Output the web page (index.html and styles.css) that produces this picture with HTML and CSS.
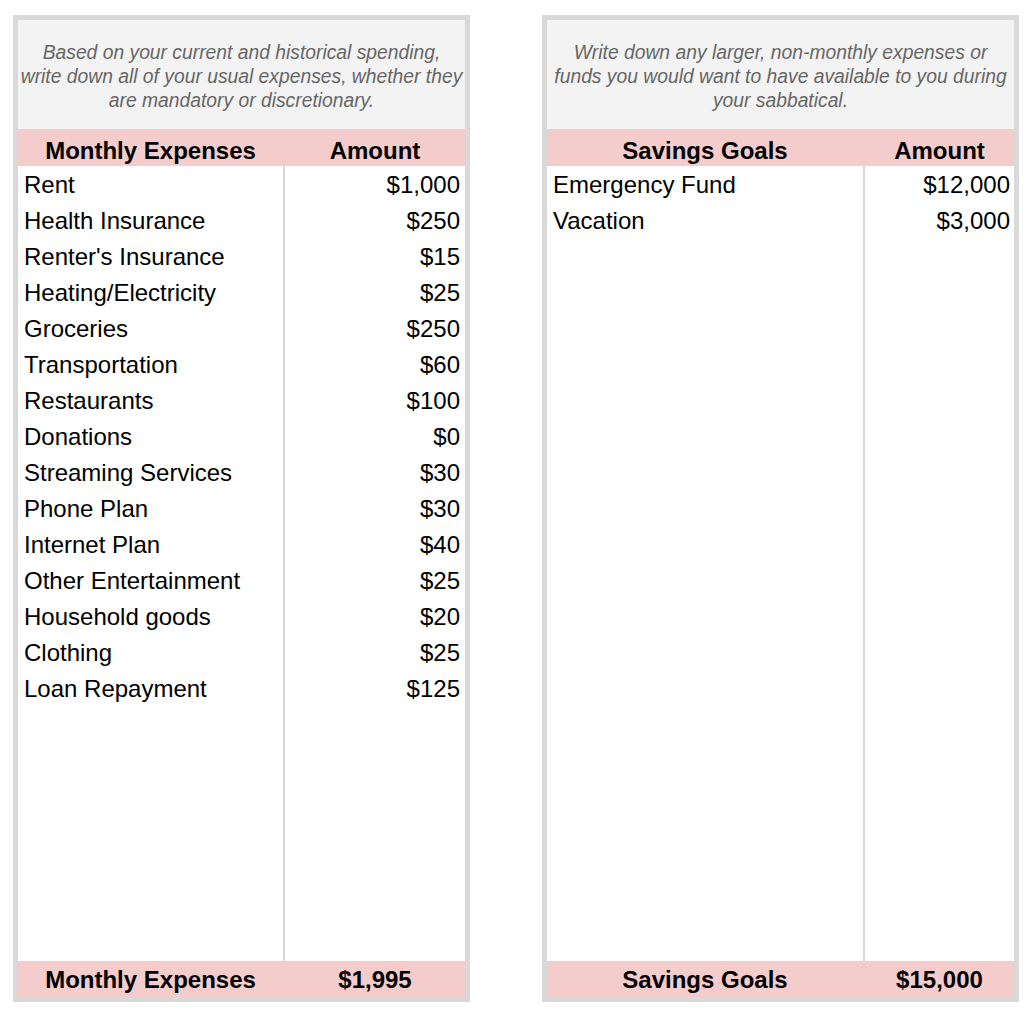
FILE: index.html
```html
<!DOCTYPE html>
<html lang="en">
<head>
<meta charset="utf-8">
<title>Sabbatical budget</title>
<link rel="stylesheet" href="styles.css">
</head>
<body>
<div class="page">
  <section class="panel panel-left">
    <div class="note">Based on your current and historical spending,<br>write down all of your usual expenses, whether they<br>are mandatory or discretionary.</div>
    <div class="row head">
      <div class="c-name">Monthly Expenses</div>
      <div class="c-amt">Amount</div>
    </div>
    <div class="body">
      <div class="col col-name">
        <div class="cell">Rent</div>
        <div class="cell">Health Insurance</div>
        <div class="cell">Renter's Insurance</div>
        <div class="cell">Heating/Electricity</div>
        <div class="cell">Groceries</div>
        <div class="cell">Transportation</div>
        <div class="cell">Restaurants</div>
        <div class="cell">Donations</div>
        <div class="cell">Streaming Services</div>
        <div class="cell">Phone Plan</div>
        <div class="cell">Internet Plan</div>
        <div class="cell">Other Entertainment</div>
        <div class="cell">Household goods</div>
        <div class="cell">Clothing</div>
        <div class="cell">Loan Repayment</div>
      </div>
      <div class="col col-amt">
        <div class="cell">$1,000</div>
        <div class="cell">$250</div>
        <div class="cell">$15</div>
        <div class="cell">$25</div>
        <div class="cell">$250</div>
        <div class="cell">$60</div>
        <div class="cell">$100</div>
        <div class="cell">$0</div>
        <div class="cell">$30</div>
        <div class="cell">$30</div>
        <div class="cell">$40</div>
        <div class="cell">$25</div>
        <div class="cell">$20</div>
        <div class="cell">$25</div>
        <div class="cell">$125</div>
      </div>
    </div>
    <div class="row foot">
      <div class="c-name">Monthly Expenses</div>
      <div class="c-amt">$1,995</div>
    </div>
  </section>

  <section class="panel panel-right">
    <div class="note">Write down any larger, non-monthly expenses or<br>funds you would want to have available to you during<br>your sabbatical.</div>
    <div class="row head">
      <div class="c-name">Savings Goals</div>
      <div class="c-amt">Amount</div>
    </div>
    <div class="body">
      <div class="col col-name">
        <div class="cell">Emergency Fund</div>
        <div class="cell">Vacation</div>
      </div>
      <div class="col col-amt">
        <div class="cell">$12,000</div>
        <div class="cell">$3,000</div>
      </div>
    </div>
    <div class="row foot">
      <div class="c-name">Savings Goals</div>
      <div class="c-amt">$15,000</div>
    </div>
  </section>
</div>
</body>
</html>
```

FILE: styles.css
```css
* { box-sizing: border-box; }

html, body {
  margin: 0;
  padding: 0;
  background: #ffffff;
}

body {
  font-family: "Liberation Sans", Arial, sans-serif;
  color: #000000;
}

.page {
  display: flex;
  align-items: flex-start;
  gap: 72px;
  padding: 15px 0 0 13px;
}

.panel {
  display: flex;
  flex-direction: column;
  border: 5px solid #d9d9d9;
  height: 987px;
  background: #ffffff;
}

.panel-left { width: 457px; --name-w: 265px; --pad-r: 5px; }
.panel-right { width: 477px; --name-w: 316px; --pad-r: 4px; }

.note {
  height: 109px;
  background: #f3f3f3;
  color: #666666;
  font-style: italic;
  font-size: 19.3px;
  line-height: 24px;
  text-align: center;
  white-space: nowrap;
  display: flex;
  align-items: center;
  justify-content: center;
  padding-top: 5px;
}

.row {
  display: flex;
  background: #f4cccc;
  font-weight: bold;
  font-size: 24px;
  text-align: center;
}

.row .c-name { width: var(--name-w); flex: none; }
.row .c-amt { flex: 1; padding-left: 2px; }

.head {
  height: 37px;
  line-height: 33px;
  padding-top: 5px;
}

.foot {
  height: 36px;
  line-height: 36px;
  padding-top: 1px;
}

.body {
  flex: 1;
  display: flex;
  font-size: 24px;
}

.col-name {
  width: var(--name-w);
  flex: none;
}

.col-amt {
  flex: 1;
  border-left: 2px solid #d9d9d9;
  text-align: right;
}

.cell {
  height: 36px;
  line-height: 36px;
  padding: 1px var(--pad-r) 0 6px;
  white-space: nowrap;
}
```
